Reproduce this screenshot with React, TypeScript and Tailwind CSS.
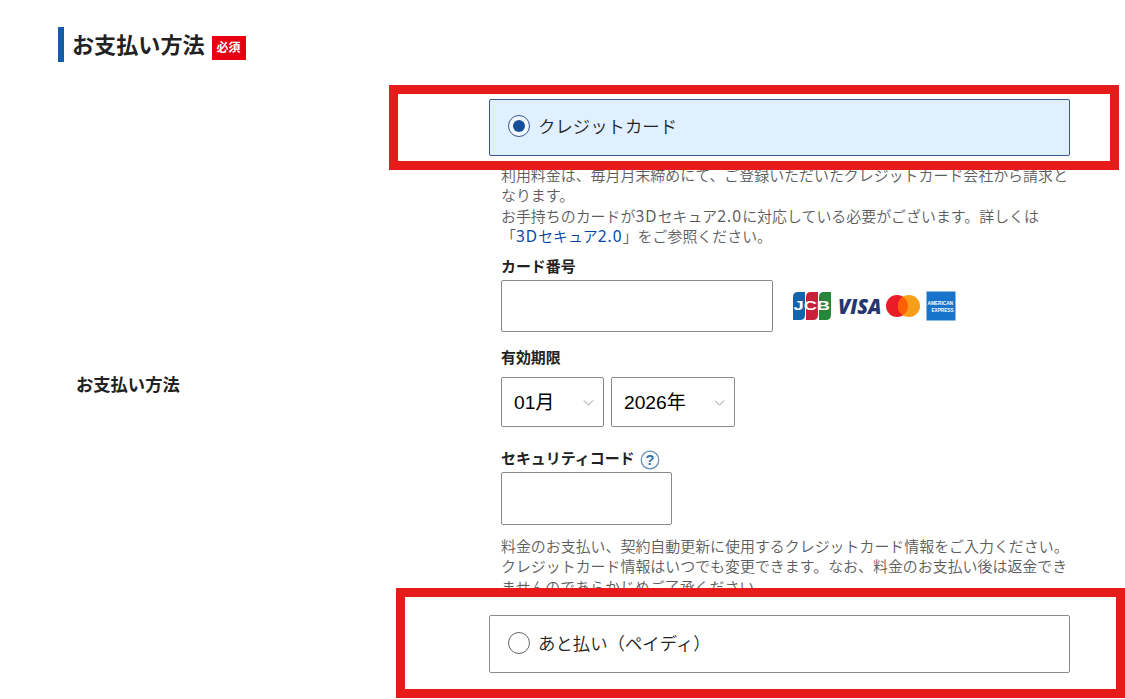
import { ReactNode } from 'react';

const months = ['01月', '02月', '03月', '04月', '05月', '06月', '07月', '08月', '09月', '10月', '11月', '12月'];
const years = ['2026年', '2027年', '2028年', '2029年', '2030年'];

const Latin = ({ children }: { children: ReactNode }) => (
    <span className="font-normal text-[15.4px] leading-none tracking-[1.1px]">{children}</span>
)

const Note = ({ children }: { children: ReactNode }) => (
    <p className="text-[14.94px] leading-[20.3px] font-[350] text-[#5c5c5c] text-nowrap">{children}</p>
)

const FieldLabel = ({ children }: { children: ReactNode }) => (
    <div className="flex h-5 items-center gap-1 text-[14.94px] leading-5 font-bold text-[#222]">{children}</div>
)

const PaymentOption = ({ label, checked }: { label: string, checked: boolean }) => (
    <label className={`flex items-center gap-2 rounded-xs border pl-[18px] ${checked ? 'h-[57px] border-[#36578f] bg-[#e0f0ff] pb-[3px]' : 'h-[58px] border-[#8a8a8a] bg-white pb-0.5'}`}>
        <span className={`flex size-[22px] items-center justify-center rounded-full border ${checked ? 'border-[#36578f] bg-[#f2f9ff]' : 'border-[#666] bg-white'}`}>
            {checked && <span className="size-3 rounded-full bg-[#164f9c]" />}
        </span>
        <span className="text-[17.4px] leading-6 font-[350] text-[#222]">{label}</span>
    </label>
)

const Select = ({ options, className }: { options: string[], className: string }) => (
    <div className={`relative h-[50px] ${className}`}>
        <select className="size-full appearance-none rounded-xs border border-[#8a8a8a] bg-white pt-0.5 pl-3 font-['Liberation_Sans','Noto_Sans_CJK_JP',sans-serif] text-[19.2px] text-black">
            {options.map(option => <option key={option}>{option}</option>)}
        </select>
        <svg className="pointer-events-none absolute top-[22px] right-2.5" width="11" height="8" viewBox="0 0 11 8" fill="none" stroke="#999">
            <path d="M1 1.5 5.5 6.2 10 1.5" />
        </svg>
    </div>
)

const CardBrands = () => (
    <div className="flex items-center">
        {/* JCB */}
        <svg width="38" height="30" viewBox="0 0 38 30">
            <path d="M5 1H12V24Q12 29 7 29H0V6Q0 1 5 1Z" fill="#1464ad" />
            <path d="M18 1H25V24Q25 29 20 29H13V6Q13 1 18 1Z" fill="#c9203c" />
            <path d="M31 1H38V24Q38 29 33 29H26V6Q26 1 31 1Z" fill="#26863b" />
            <text x="0.5" y="18.8" fill="white" fontFamily="Liberation Sans, sans-serif" fontWeight="bold" fontSize="12" textLength="36.5" lengthAdjust="spacingAndGlyphs">JCB</text>
        </svg>
        {/* VISA */}
        <svg className="ml-1.5 overflow-visible" width="45" height="30" viewBox="0 0 45 30">
            <text x="1" y="22.5" fill="#26366f" fontFamily="Open Sans, sans-serif" fontWeight="800" fontStyle="italic" fontSize="21" textLength="43.5" lengthAdjust="spacingAndGlyphs">VISA</text>
        </svg>
        {/* Mastercard */}
        <svg className="ml-1" width="34" height="30" viewBox="0 0 34 30">
            <circle cx="11" cy="15" r="11" fill="#eb1b27" />
            <circle cx="23" cy="15" r="11" fill="#f79e1b" />
            <path d="M17 5.8A11 11 0 0 1 17 24.2A11 11 0 0 1 17 5.8Z" fill="#ff5f00" />
        </svg>
        {/* American Express */}
        <svg className="ml-1.5 overflow-visible" width="30" height="30" viewBox="0 0 30 30">
            <rect x="0.5" y="0.5" width="29" height="29" fill="#1873ca" />
            <text x="1.5" y="13.8" fill="white" fontFamily="Liberation Sans, sans-serif" fontWeight="bold" fontSize="5.5" textLength="25.5" lengthAdjust="spacingAndGlyphs">AMERICAN</text>
            <text x="5.5" y="20.8" fill="white" fontFamily="Liberation Sans, sans-serif" fontWeight="bold" fontSize="5.5" textLength="22" lengthAdjust="spacingAndGlyphs">EXPRESS</text>
        </svg>
    </div>
)

export default function App() {
    return (
        <main className="relative h-[699px] w-[1125px] overflow-hidden bg-white pt-[27px] pl-[58px] font-['Noto_Sans','Noto_Sans_CJK_JP',sans-serif]">
            <div className="flex h-[35px] items-center border-l-6 border-[#165cad] pl-2">
                <h1 className="pb-px text-[22.1px] leading-[34px] font-bold text-[#222]">お支払い方法</h1>
                <span className="mt-[7px] ml-[7px] flex h-6 w-[34px] items-center justify-center bg-[#e60012] text-xs font-bold text-white">必須</span>
            </div>

            <div className="mt-[37px] flex">
                <div className="flex h-[572px] w-[431px] items-center pl-[18px] text-[17.3px] font-bold text-[#222]">お支払い方法</div>

                <div className="w-[581px]">
                    <PaymentOption label="クレジットカード" checked />

                    <div className="mt-[9px] px-3">
                        <Note>
                            利用料金は、毎月月末締めにて、ご登録いただいたクレジットカード会社から請求と<br />
                            なります。<br />
                            お手持ちのカードが<Latin>3D</Latin>セキュア<Latin>2.0</Latin>に対応している必要がございます。詳しくは<br />
                            「<a className="text-[#0745a5]"><Latin>3D</Latin>セキュア<Latin>2.0</Latin></a>」をご参照ください。
                        </Note>

                        <div className="mt-[9.8px]">
                            <FieldLabel>カード番号</FieldLabel>
                        </div>
                        <div className="mt-1 flex items-center gap-5">
                            <input className="h-[52px] w-[272px] rounded-xs border border-[#8a8a8a]" />
                            <CardBrands />
                        </div>

                        <div className="mt-[15px]">
                            <FieldLabel>有効期限</FieldLabel>
                        </div>
                        <div className="mt-2.5 flex gap-[7px]">
                            <Select options={months} className="w-[103px]" />
                            <Select options={years} className="w-[124px]" />
                        </div>

                        <div className="mt-[21px]">
                            <FieldLabel>
                                セキュリティコード
                                <svg className="mt-1 ml-px" width="20" height="20" viewBox="0 0 20 20">
                                    <circle cx="10" cy="10" r="8.8" fill="#f5fbff" stroke="#658bab" strokeWidth="1.2" />
                                    <text x="10" y="15.2" textAnchor="middle" fill="#356da5" fontFamily="Liberation Sans, sans-serif" fontWeight="bold" fontSize="14.5">?</text>
                                </svg>
                            </FieldLabel>
                        </div>
                        <input className="mt-1 block h-[53px] w-[171px] rounded-xs border border-[#8a8a8a]" />

                        <div className="mt-[11px]">
                            <Note>
                                料金のお支払い、契約自動更新に使用するクレジットカード情報をご入力ください。<br />
                                クレジットカード情報はいつでも変更できます。なお、料金のお支払い後は返金でき<br />
                                ませんのであらかじめご了承ください。
                            </Note>
                        </div>
                    </div>

                    <div className="mt-[18px]">
                        <PaymentOption label="あと払い（ペイディ）" checked={false} />
                    </div>
                </div>
            </div>

            {/* Highlight frames over the two payment options */}
            <div className="pointer-events-none absolute top-[85px] left-[389px] h-[85px] w-[730px] border-9 border-[#e81b1b]" />
            <div className="pointer-events-none absolute top-[588px] left-[396px] h-[110px] w-[729px] border-9 border-[#e81b1b]" />
        </main>
    )
}
